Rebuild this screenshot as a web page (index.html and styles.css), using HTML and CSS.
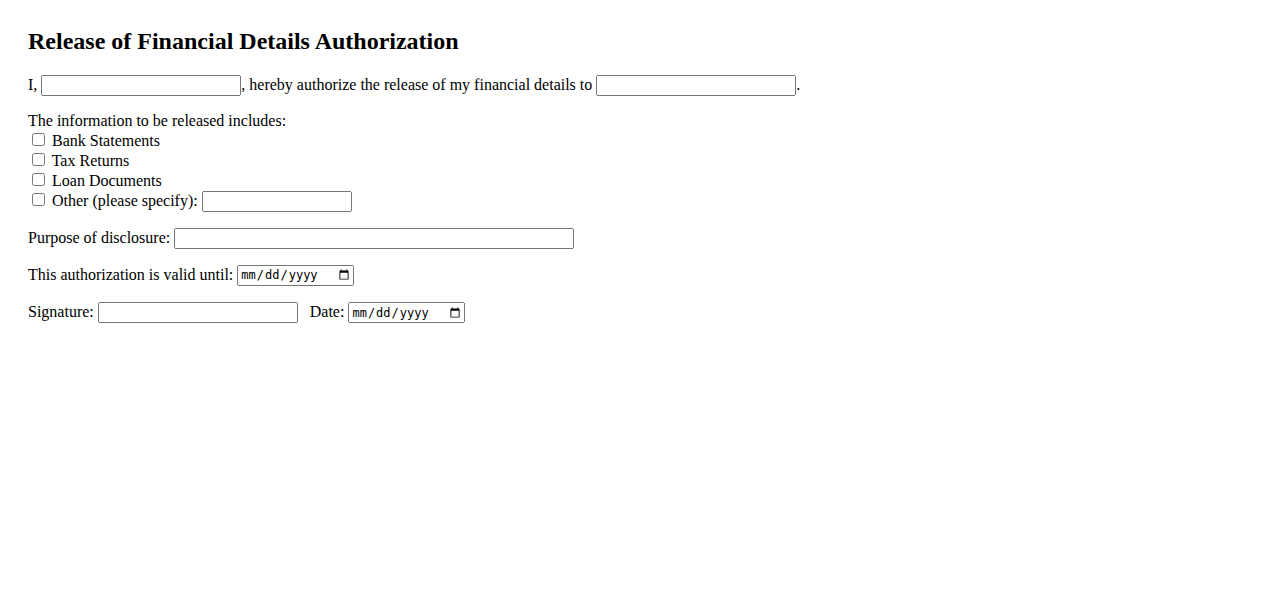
FILE: index.html
```html
<!DOCTYPE html>
<html>
<head>
<meta charset="utf-8">
<title>Release of Financial Details Authorization</title>
<link rel="stylesheet" href="styles.css">
</head>
<body>
<div class="form">
<h2 class="title">Release of Financial Details Authorization</h2>
<p>I, <input type="text" class="w200">, hereby authorize the release of my financial details to <input type="text" class="w200">.</p>
<p>The information to be released includes:<br>
<input type="checkbox"> Bank Statements<br>
<input type="checkbox"> Tax Returns<br>
<input type="checkbox"> Loan Documents<br>
<input type="checkbox"> Other (please specify): <input type="text" class="w150"></p>
<p>Purpose of disclosure: <input type="text" class="w400"></p>
<p>This authorization is valid until: <input type="date" class="date"></p>
<p>Signature: <input type="text" class="w200"> <span class="date-label">Date:</span> <input type="date" class="date"></p>
</div>
</body>
</html>
```
FILE: styles.css
```css
body {
  margin: 8px;
  font-family: "Liberation Serif", "Times New Roman", serif;
  font-size: 16px;
  color: #000;
  background: #fff;
}
.form {
  padding: 20px;
}
.title {
  margin-top: 0;
  font-size: 24px;
}
.w200 { width: 200px; box-sizing: border-box; }
.w150 { width: 150px; box-sizing: border-box; }
.w400 { width: 400px; box-sizing: border-box; }
.date {
  width: 117px;
  height: 21px;
  box-sizing: border-box;
  font-size: 12px;
}
.date-label { margin-left: 8px; }
```
